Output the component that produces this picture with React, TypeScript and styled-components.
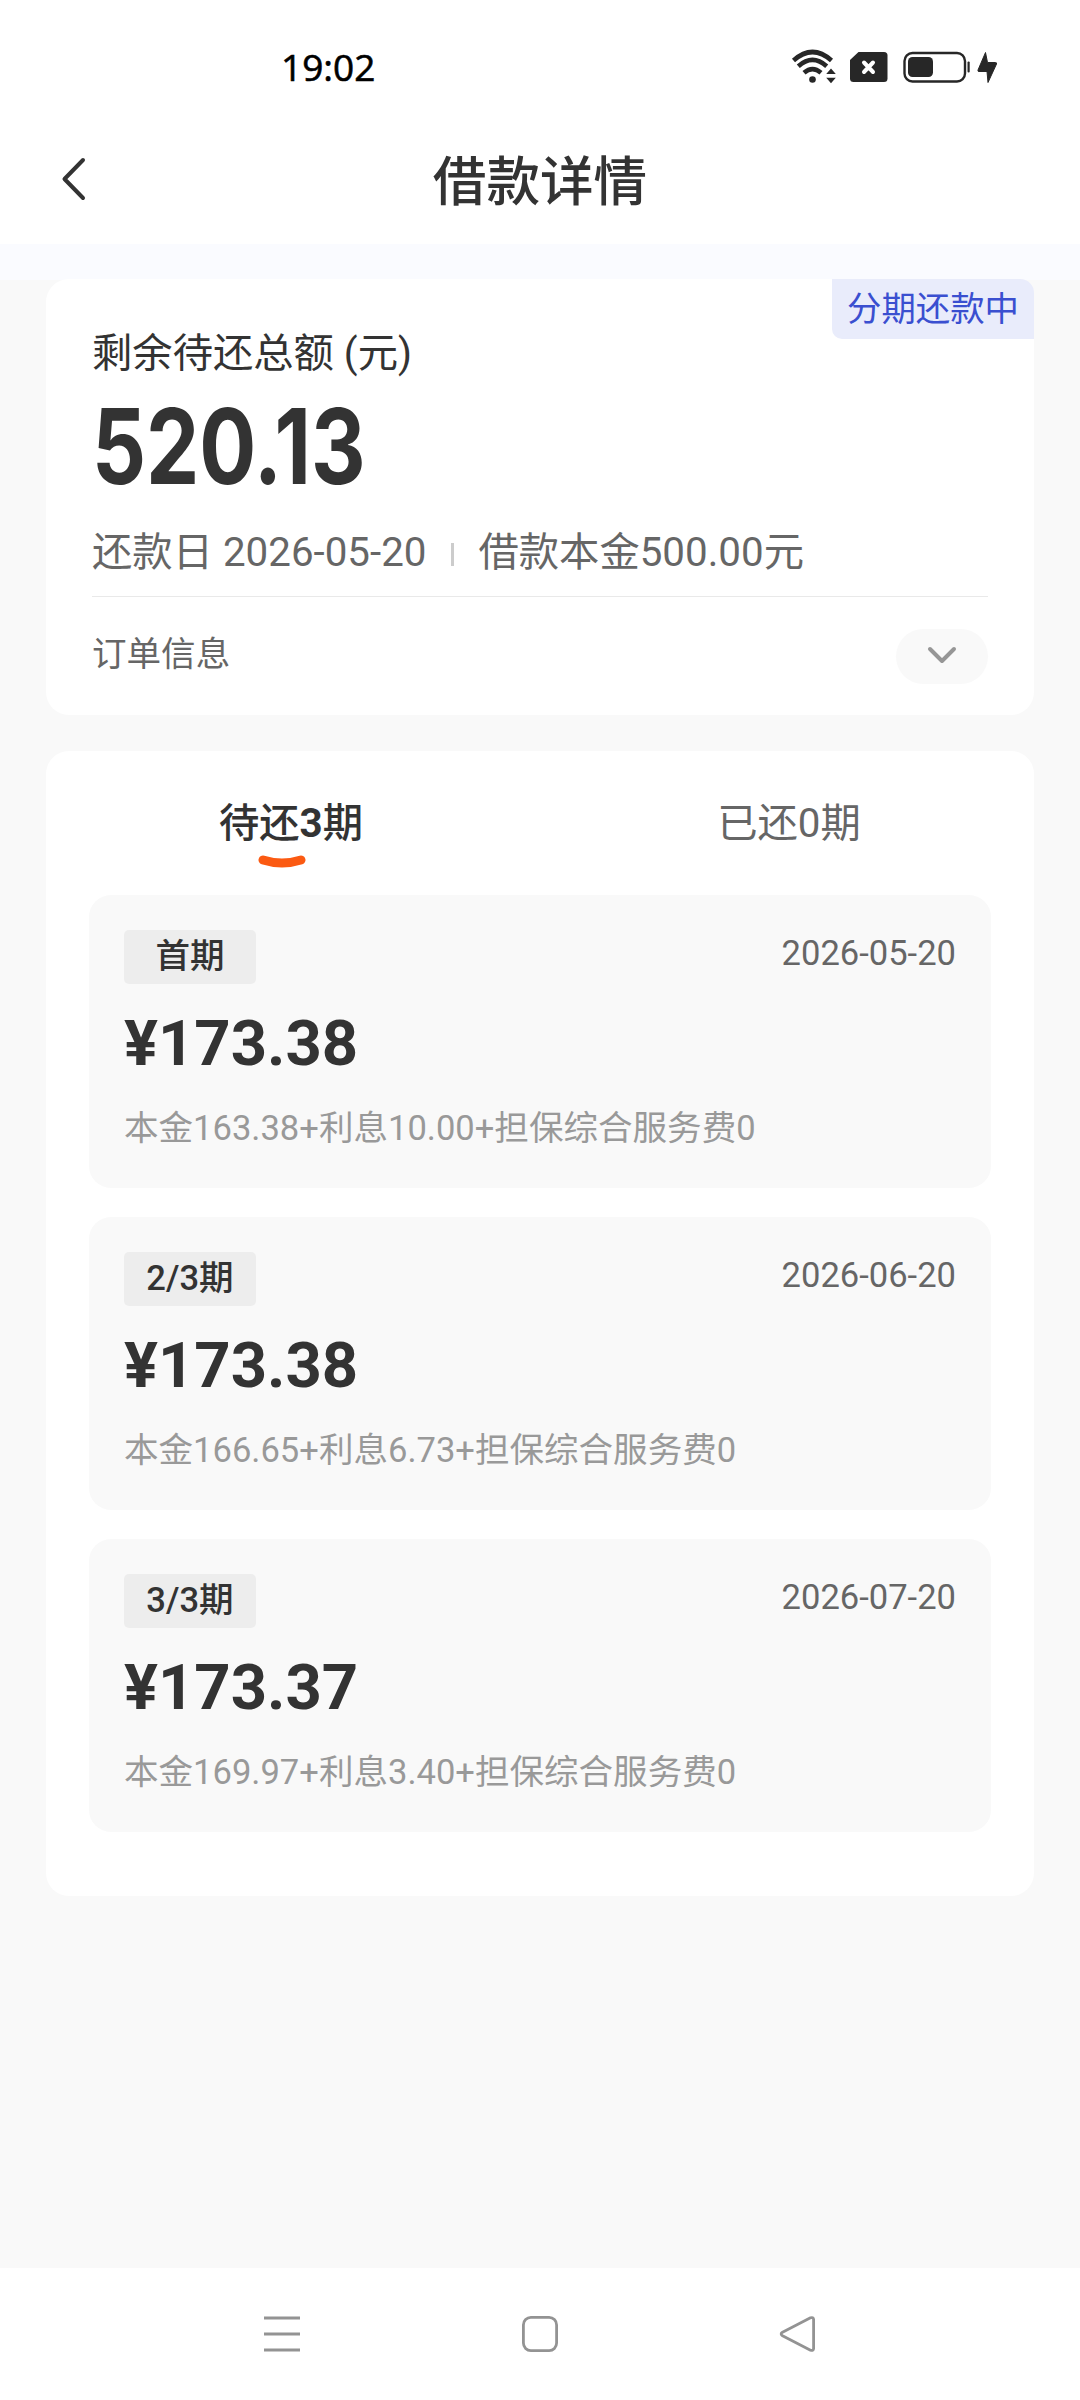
import React from "react";
import styled, { createGlobalStyle } from "styled-components";

const GlobalStyle = createGlobalStyle`
  * { box-sizing: border-box; }
  html, body { margin: 0; padding: 0; background: #f9f9f9; }
  body {
    font-family: Roboto, "Noto Sans CJK SC", sans-serif;
    color: #333;
  }
`;

const Screen = styled.div`
  width: 1080px;
  height: 2400px;
  display: flex;
  flex-direction: column;
  background: #f9f9f9;
`;

const StatusBar = styled.div`
  height: 116px;
  padding: 18px 83px 0 281px;
  display: flex;
  align-items: center;
  justify-content: space-between;
  background: #fff;
`;

const Clock = styled.span`
  font-family: "Open Sans", "Noto Sans", sans-serif;
  font-size: 37px;
  font-weight: 500;
  line-height: 50px;
  color: #000;
  -webkit-text-stroke: 0.6px #000;
`;

const StatusIcons = styled.svg`
  display: block;
  width: 206px;
  height: 36px;
`;

const TitleBar = styled.header`
  height: 128px;
  padding: 0 60px;
  display: grid;
  grid-template-columns: 30px 1fr 30px;
  align-items: center;
  background: #fff;
`;

const BackIcon = styled.svg`
  display: block;
  width: 28px;
  height: 46px;
  margin-bottom: 2px;
`;

const PageTitle = styled.h1`
  margin: 0;
  padding-top: 5px;
  font-size: 53.6px;
  font-weight: 500;
  line-height: 70px;
  text-align: center;
`;

const Content = styled.main`
  flex: 1;
  padding: 35px 46px 0;
  display: flex;
  flex-direction: column;
  gap: 36px;
  background: linear-gradient(#fafbff, #fafbff) top / 100% 36px no-repeat #f9f9f9;
`;

const Card = styled.section`
  background: #fff;
  border-radius: 23px;
`;

const SummaryCard = styled(Card)`
  position: relative;
  height: 436px;
  padding: 47px 46px 0;
`;

const StatusBadge = styled.span`
  position: absolute;
  top: 0;
  right: 0;
  width: 202px;
  height: 60px;
  border-radius: 0 14px 0 10px;
  background: #e9ecfb;
  color: #3a4fd0;
  font-size: 34.4px;
  line-height: 61px;
  text-align: center;
`;

const SummaryLabel = styled.div`
  font-size: 40.32px;
  line-height: 56px;
`;

const TotalAmount = styled.div`
  width: max-content;
  margin-top: 19px;
  font-family: Inter, Roboto, sans-serif;
  font-size: 104px;
  font-weight: 750;
  line-height: 90px;
  transform: scaleX(0.813);
  transform-origin: left;
`;

const SummaryMeta = styled.div`
  margin-top: 34px;
  padding-bottom: 15px;
  display: flex;
  align-items: center;
  border-bottom: 1px solid #e9e9e9;
  font-size: 40.32px;
  line-height: 56px;
  color: #666;
`;

const MetaDivider = styled.i`
  width: 3px;
  height: 23px;
  margin: 3px 24px 0 25px;
  background: #ccc;
`;

const OrderRow = styled.div`
  height: 118px;
  display: flex;
  align-items: center;
  justify-content: space-between;
  font-size: 34.56px;
  color: #666;
`;

const OrderLabel = styled.span`
  padding-bottom: 4px;
  line-height: 48px;
`;

const ExpandButton = styled.button`
  width: 92px;
  height: 55px;
  padding: 0;
  display: flex;
  align-items: center;
  justify-content: center;
  border: 0;
  border-radius: 28px;
  background: #f9f9f9;
`;

const PlanCard = styled(Card)`
  height: 1145px;
  padding: 45px 43px 0;
`;

const Tabs = styled.div`
  height: 99px;
  display: flex;
  justify-content: center;
  gap: 138px;
`;

const Tab = styled.div<{ $active?: boolean }>`
  width: 360px;
  display: flex;
  flex-direction: column;
  align-items: center;
  font-size: 40.32px;
  font-weight: ${(p) => (p.$active ? 500 : 400)};
  line-height: 56px;
  color: ${(p) => (p.$active ? "#333" : "#666")};
`;

const TabCount = styled.b`
  font-weight: 700;
`;

const TabMark = styled.svg`
  display: block;
  width: 48px;
  height: 14px;
  margin: 3px 18px 0 0;
`;

const PlanList = styled.div`
  display: flex;
  flex-direction: column;
  gap: 29px;
`;

const PlanItem = styled.article`
  height: 293px;
  padding: 35px 35px 0 35px;
  border-radius: 22px;
  background: #f9f9f9;
`;

const PlanHead = styled.div`
  height: 54px;
  display: flex;
  justify-content: space-between;
`;

const PeriodTag = styled.span`
  width: 132px;
  border-radius: 5px;
  background: #ededed;
  font-size: 34.56px;
  font-weight: 500;
  line-height: 53px;
  text-align: center;
`;

const DueDate = styled.time`
  font-size: 34.56px;
  line-height: 46px;
  color: #666;
`;

const PlanAmount = styled.div`
  margin-top: 24px;
  font-size: 63.4px;
  font-weight: 700;
  line-height: 70px;
`;

const PlanDetail = styled.div`
  margin-top: 26px;
  font-size: 34.56px;
  line-height: 48px;
  color: #999;
`;

const NavBar = styled.nav`
  height: 132px;
  padding: 0 263px;
  display: flex;
  align-items: center;
  justify-content: space-between;
  background: #fff;
`;

const NavIcon = styled.svg`
  display: block;
  width: 38px;
  height: 38px;
  fill: none;
  stroke: #939393;
  stroke-width: 2.8;
`;

const plans = [
  { tag: "首期", date: "2026-05-20", amount: "¥173.38", detail: "本金163.38+利息10.00+担保综合服务费0" },
  { tag: "2/3期", date: "2026-06-20", amount: "¥173.38", detail: "本金166.65+利息6.73+担保综合服务费0" },
  { tag: "3/3期", date: "2026-07-20", amount: "¥173.37", detail: "本金169.97+利息3.40+担保综合服务费0" },
];

function StatusGlyphs() {
  return (
    <StatusIcons viewBox="791 49 206 36" fill="#272727">
      <g fill="none" stroke="#272727" strokeWidth="4.6">
        <path d="M793.5 60.5 Q812.5 43.5 831.5 60.5" />
        <path d="M798.3 66.2 Q812.5 53.7 826.7 66.2" />
        <path d="M804 72.8 Q812.5 65.5 821 72.8" />
      </g>
      <circle cx="812.5" cy="79.5" r="3.3" />
      <path d="M831 68.5 L835.8 74 H826.2 Z M826.2 77.7 H835.8 L831 83.2 Z" />
      <path d="M858.5 52 H884 Q887.5 52 887.5 55.5 V78.5 Q887.5 82 884 82 H853.5 Q850 82 850 78.5 V60 Z" />
      <path d="M864 62.5 L873 72 M873 62.5 L864 72" stroke="#fff" strokeWidth="4" strokeLinecap="round" />
      <rect x="904.5" y="53" width="60.5" height="28.5" rx="8" fill="none" stroke="#272727" strokeWidth="2.4" />
      <rect x="908" y="57" width="25" height="20" rx="4.5" />
      <rect x="967.5" y="61.5" width="2.2" height="11" rx="1" />
      <path d="M985.5 52.5 L978 70 Q977.5 71.5 979 71.5 H987 L988 82.5 L996.5 64 Q997 62.5 995.5 62.5 H987.5 Z" stroke="#272727" strokeLinejoin="round" />
    </StatusIcons>
  );
}

export default function App() {
  return (
    <>
      <GlobalStyle />
      <Screen lang="zh-CN">
        <StatusBar>
          <Clock>19:02</Clock>
          <StatusGlyphs />
        </StatusBar>
        <TitleBar>
          <BackIcon viewBox="0 0 28 46" fill="none" stroke="#333" strokeWidth="4" strokeLinecap="round" strokeLinejoin="round">
            <path d="M23 4 L4.5 23 L23 42" />
          </BackIcon>
          <PageTitle>借款详情</PageTitle>
        </TitleBar>
        <Content>
          <SummaryCard>
            <StatusBadge>分期还款中</StatusBadge>
            <SummaryLabel>剩余待还总额 (元)</SummaryLabel>
            <TotalAmount>520.13</TotalAmount>
            <SummaryMeta>
              <span>还款日 2026-05-20</span>
              <MetaDivider />
              <span>借款本金500.00元</span>
            </SummaryMeta>
            <OrderRow>
              <OrderLabel>订单信息</OrderLabel>
              <ExpandButton aria-label="展开">
                <svg width="32" height="20" viewBox="0 0 32 20" fill="none" stroke="#969696" strokeWidth="4" strokeLinecap="round" strokeLinejoin="round">
                  <path d="M4 3 L16 15 L28 3" />
                </svg>
              </ExpandButton>
            </OrderRow>
          </SummaryCard>
          <PlanCard>
            <Tabs>
              <Tab $active>
                <span>
                  待还<TabCount>3</TabCount>期
                </span>
                <TabMark viewBox="0 0 48 14" fill="none" stroke="#fb5a12" strokeWidth="9" strokeLinecap="round">
                  <path d="M5 5 Q24 11 43 5" />
                </TabMark>
              </Tab>
              <Tab>已还0期</Tab>
            </Tabs>
            <PlanList>
              {plans.map((p) => (
                <PlanItem key={p.tag}>
                  <PlanHead>
                    <PeriodTag>{p.tag}</PeriodTag>
                    <DueDate>{p.date}</DueDate>
                  </PlanHead>
                  <PlanAmount>{p.amount}</PlanAmount>
                  <PlanDetail>{p.detail}</PlanDetail>
                </PlanItem>
              ))}
            </PlanList>
          </PlanCard>
        </Content>
        <NavBar>
          <NavIcon viewBox="0 0 38 38">
            <path d="M1 3 H37 M1 19 H37 M1 35 H37" />
          </NavIcon>
          <NavIcon viewBox="0 0 38 38">
            <rect x="2.4" y="2.4" width="33.2" height="33.2" rx="7.5" />
          </NavIcon>
          <NavIcon viewBox="0 0 38 38" strokeLinejoin="round">
            <path d="M3.5 17.3 L31.5 2.8 Q34.3 1.8 34.6 4.5 V33.5 Q34.3 36.2 31.5 35.2 L3.5 20.7 Q0.8 19 3.5 17.3 Z" />
          </NavIcon>
        </NavBar>
      </Screen>
    </>
  );
}
